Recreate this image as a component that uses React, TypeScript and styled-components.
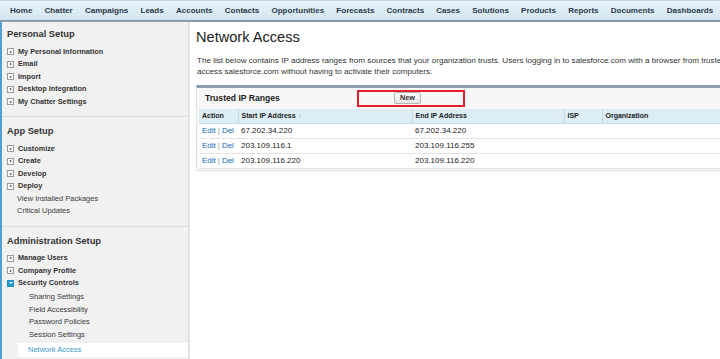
import React from 'react';
import styled, { createGlobalStyle } from 'styled-components';

const GlobalStyle = createGlobalStyle`
  html, body {
    margin: 0;
    padding: 0;
    overflow: hidden;
    background: #ffffff;
    font-family: "Liberation Sans", Arial, sans-serif;
  }
`;

const Page = styled.div`
  width: 1000px;
  height: 359px;
  display: flex;
  flex-direction: column;
`;

const TabBar = styled.div`
  height: 19px;
  display: flex;
  align-items: center;
  gap: 12.2px;
  padding-left: 10px;
  background: linear-gradient(#e9f3f9, #d2e6f0);
  border-top: 1px solid #c3d7e3;
  border-bottom: 2px solid #8497ab;
  flex-shrink: 0;
`;

const Tab = styled.span`
  font-size: 8.05px;
  font-weight: bold;
  color: #2b3a4c;
  white-space: nowrap;
`;

const Body = styled.div`
  flex: 1;
  display: flex;
  min-height: 0;
`;

const Sidebar = styled.div`
  width: 186px;
  flex-shrink: 0;
  background: #f1f1f1;
  border-left: 2px solid #4f9fd3;
  border-right: 1px solid #dedede;
  box-shadow: 1px 0 1px #e8e8e8;
  display: flex;
  flex-direction: column;
`;

const Section = styled.div<{ $first?: boolean }>`
  padding: ${(p) => (p.$first ? '4px' : '6px')} 0 8px 5px;
  border-bottom: 1px solid #dddddd;
  &:last-child {
    border-bottom: none;
  }
`;

const SectionTitle = styled.div`
  font-size: 9.3px;
  font-weight: bold;
  color: #333333;
  line-height: 16px;
  margin-bottom: 3.5px;
`;

const Item = styled.div`
  display: flex;
  align-items: center;
  gap: 4px;
  font-size: 7.3px;
  font-weight: bold;
  color: #333333;
  line-height: 12.5px;
  height: 12.5px;
`;

const Toggle = styled.span<{ $open?: boolean }>`
  width: 5px;
  height: 5px;
  border: 1px solid ${(p) => (p.$open ? '#1a8fc4' : '#9a9a9a')};
  background: ${(p) => (p.$open ? '#1f9bd1' : '#fafafa')};
  display: flex;
  align-items: center;
  justify-content: center;
  flex-shrink: 0;
  &::after {
    content: '';
    width: 0;
    height: 0;
    ${(p) =>
      p.$open
        ? `border-left: 2px solid transparent;
           border-right: 2px solid transparent;
           border-top: 2px solid #ffffff;`
        : `border-top: 1.5px solid transparent;
           border-bottom: 1.5px solid transparent;
           border-left: 2px solid #333333;
           margin-left: 1px;`}
  }
`;

const SubItem = styled.div<{ $indent?: boolean }>`
  font-size: 7.5px;
  color: #3a3a3a;
  line-height: 12.5px;
  height: 12.5px;
  padding-left: ${(p) => (p.$indent ? '22px' : '10px')};
`;

const SubList = styled.div`
  margin-top: 1.5px;
`;

const ActiveItem = styled.div`
  margin: 2px 0 0 11px;
  padding-left: 10px;
  background: #ffffff;
  font-size: 7.5px;
  color: #3b9ad3;
  line-height: 14px;
  height: 14px;
`;

const Main = styled.div`
  flex: 1;
  padding: 5px 0 0 7px;
`;

const Heading = styled.h1`
  margin: 0;
  font-size: 14.6px;
  font-weight: normal;
  color: #222222;
  line-height: 20px;
`;

const Description = styled.p`
  margin: 8px 0 0 1px;
  font-size: 8.1px;
  color: #333333;
  line-height: 11px;
  white-space: nowrap;
`;

const Block = styled.div`
  margin-top: 8px;
  width: 600px;
  background: #f8f8f8;
  border: 1px solid #e0e3e5;
  border-top: 3px solid #8e9dab;
  padding: 0 2px 1px;
`;

const BlockHeader = styled.div`
  display: flex;
  align-items: center;
  height: 20px;
  margin-bottom: 1px;
`;

const BlockTitle = styled.div`
  width: 152px;
  padding-left: 6px;
  font-size: 8.6px;
  font-weight: bold;
  color: #222222;
`;

const ButtonCell = styled.div`
  width: 108px;
  height: 17px;
  border: 2px solid #e0202a;
  display: flex;
  align-items: center;
  padding-left: 35px;
  box-sizing: border-box;
`;

const Button = styled.button`
  font-family: inherit;
  font-size: 7.3px;
  font-weight: bold;
  color: #333333;
  padding: 0 5px;
  height: 12px;
  line-height: 10px;
  border: 1px solid #b5b5b5;
  border-radius: 2px;
  background: linear-gradient(#ffffff, #e6e6e6);
`;

const Table = styled.table`
  width: 100%;
  border-collapse: collapse;
  table-layout: fixed;
  background: #ffffff;
`;

const Th = styled.th<{ $w?: number }>`
  width: ${(p) => (p.$w ? `${p.$w}px` : 'auto')};
  box-sizing: border-box;
  text-align: left;
  font-size: 7px;
  font-weight: bold;
  color: #222222;
  height: 14px;
  padding: 0 3px;
  background: #dcedf6;
  border-left: 1px solid #c6d9e4;
  border-bottom: 1px solid #c9dbe5;
  &:first-child {
    border-left: none;
  }
`;

const SortArrow = styled.span`
  font-weight: normal;
  color: #777777;
  margin-left: 3px;
  font-size: 6px;
`;

const Td = styled.td`
  font-size: 8px;
  color: #222222;
  height: 14px;
  padding: 0 3px;
  border-bottom: 1px solid #e3e3e3;
  white-space: nowrap;
`;

const ActionLink = styled.a`
  color: #1569b5;
  text-decoration: none;
`;

const Pipe = styled.span`
  color: #999999;
  margin: 0 2px;
`;

const tabs = [
  'Home', 'Chatter', 'Campaigns', 'Leads', 'Accounts', 'Contacts', 'Opportunities',
  'Forecasts', 'Contracts', 'Cases', 'Solutions', 'Products', 'Reports', 'Documents',
  'Dashboards',
];

const ranges = [
  { start: '67.202.34.220', end: '67.202.34.220' },
  { start: '203.109.116.1', end: '203.109.116.255' },
  { start: '203.109.116.220', end: '203.109.116.220' },
];

const App = () => (
  <Page>
    <GlobalStyle />
    <TabBar>
      {tabs.map((t) => (
        <Tab key={t}>{t}</Tab>
      ))}
    </TabBar>
    <Body>
      <Sidebar>
        <Section $first>
          <SectionTitle>Personal Setup</SectionTitle>
          {['My Personal Information', 'Email', 'Import', 'Desktop Integration', 'My Chatter Settings'].map((i) => (
            <Item key={i}>
              <Toggle />
              {i}
            </Item>
          ))}
        </Section>
        <Section>
          <SectionTitle>App Setup</SectionTitle>
          {['Customize', 'Create', 'Develop', 'Deploy'].map((i) => (
            <Item key={i}>
              <Toggle />
              {i}
            </Item>
          ))}
          <SubItem>View Installed Packages</SubItem>
          <SubItem>Critical Updates</SubItem>
        </Section>
        <Section>
          <SectionTitle>Administration Setup</SectionTitle>
          <Item>
            <Toggle />
            Manage Users
          </Item>
          <Item>
            <Toggle />
            Company Profile
          </Item>
          <Item>
            <Toggle $open />
            Security Controls
          </Item>
          <SubList>
            {['Sharing Settings', 'Field Accessibility', 'Password Policies', 'Session Settings'].map((i) => (
              <SubItem key={i} $indent>
                {i}
              </SubItem>
            ))}
          </SubList>
          <ActiveItem>Network Access</ActiveItem>
        </Section>
      </Sidebar>
      <Main>
        <Heading>Network Access</Heading>
        <Description>
          The list below contains IP address ranges from sources that your organization trusts. Users logging in to
          salesforce.com with a browser from trusted IP addresses can
          <br />
          access salesforce.com without having to activate their computers.
        </Description>
        <Block>
          <BlockHeader>
            <BlockTitle>Trusted IP Ranges</BlockTitle>
            <ButtonCell>
              <Button>New</Button>
            </ButtonCell>
          </BlockHeader>
          <Table>
            <thead>
              <tr>
                <Th $w={39}>Action</Th>
                <Th $w={174}>
                  Start IP Address<SortArrow>↑</SortArrow>
                </Th>
                <Th $w={152}>End IP Address</Th>
                <Th $w={38}>ISP</Th>
                <Th>Organization</Th>
              </tr>
            </thead>
            <tbody>
              {ranges.map((r) => (
                <tr key={r.start}>
                  <Td>
                    <ActionLink href="#">Edit</ActionLink>
                    <Pipe>|</Pipe>
                    <ActionLink href="#">Del</ActionLink>
                  </Td>
                  <Td>{r.start}</Td>
                  <Td>{r.end}</Td>
                  <Td />
                  <Td />
                </tr>
              ))}
            </tbody>
          </Table>
        </Block>
      </Main>
    </Body>
  </Page>
);

export default App;
